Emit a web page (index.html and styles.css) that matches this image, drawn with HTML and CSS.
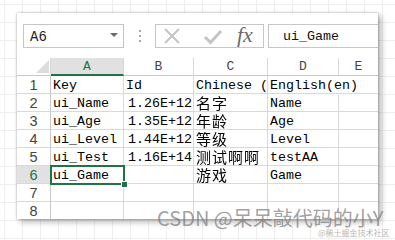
FILE: index.html
```html
<!DOCTYPE html>
<html>
<head>
<meta charset="utf-8">
<link rel="stylesheet" href="styles.css">
</head>
<body>
<div class="window">
  <div class="fbar">
    <div class="namebox"><span class="nb-text">A6</span><span class="caret"></span></div>
    <div class="dots"><i></i><i></i><i></i></div>
    <div class="fbtns">
      <svg class="ic-x" width="18" height="16" viewBox="0 0 18 16"><path d="M2 1 L16 15 M16 1 L2 15" stroke="#c4c4c4" stroke-width="2" fill="none"/></svg>
      <svg class="ic-ok" width="20" height="16" viewBox="0 0 20 16"><path d="M2 8 L7.5 13.5 L18 2" stroke="#c4c4c4" stroke-width="3" fill="none"/></svg>
      <span class="fx">fx</span>
    </div>
    <div class="finput">ui_Game</div>
  </div>
  <div class="sheet">
    <div class="hd corner"><svg width="13" height="13" viewBox="0 0 13 13"><path d="M13 0 L13 13 L0 13 Z" fill="#dcdcdc"/></svg></div>
    <div class="hd col sel">A</div>
    <div class="hd col">B</div>
    <div class="hd col">C</div>
    <div class="hd col">D</div>
    <div class="hd col last">E</div>

    <div class="rh">1</div><div class="c">Key</div><div class="c">Id</div><div class="c clip">Chinese (zh)</div><div class="c spill">English(en)</div><div class="c last"></div>
    <div class="rh">2</div><div class="c">ui_Name</div><div class="c num">1.26E+12</div><div class="c"><span class="zh">名字</span></div><div class="c">Name</div><div class="c last"></div>
    <div class="rh">3</div><div class="c">ui_Age</div><div class="c num">1.35E+12</div><div class="c"><span class="zh">年龄</span></div><div class="c">Age</div><div class="c last"></div>
    <div class="rh">4</div><div class="c">ui_Level</div><div class="c num">1.44E+12</div><div class="c"><span class="zh">等级</span></div><div class="c">Level</div><div class="c last"></div>
    <div class="rh">5</div><div class="c">ui_Test</div><div class="c num">1.16E+14</div><div class="c"><span class="zh">测试啊啊</span></div><div class="c">testAA</div><div class="c last"></div>
    <div class="rh sel">6</div><div class="c">ui_Game</div><div class="c num"></div><div class="c"><span class="zh">游戏</span></div><div class="c">Game</div><div class="c last"></div>
    <div class="rh">7</div><div class="c"></div><div class="c"></div><div class="c"></div><div class="c"></div><div class="c last"></div>
    <div class="rh">8</div><div class="c"></div><div class="c"></div><div class="c"></div><div class="c"></div><div class="c last"></div>

    <div class="selbox"><span class="handle"></span></div>
  </div>
</div>
<div class="wm">CSDN @呆呆敲代码的小Y</div>
<div class="wm2">@稀土掘金技术社区</div>
</body>
</html>
```
FILE: styles.css
```css
html, body {
  margin: 0;
  padding: 0;
}
body {
  width: 395px;
  height: 240px;
  overflow: hidden;
  position: relative;
  background-color: #fff;
  background-image:
    linear-gradient(#eeeeee 1px, transparent 1px),
    linear-gradient(90deg, #eeeeee 1px, transparent 1px);
  background-size: 18px 18px;
  background-position: 4px 4px;
  padding: 13px 0 0 17px;
  box-sizing: border-box;
  font-family: "Liberation Mono", "Noto Sans CJK SC", monospace;
}
.window {
  width: 361px;
  height: 206px;
  background: #fff;
  overflow: hidden;
  box-shadow: 0 0 2px rgba(0,0,0,0.35), 3px 3px 6px rgba(0,0,0,0.3);
}
.fbar {
  display: flex;
  align-items: stretch;
  height: 24px;
  margin-top: 11px;
  padding-left: 6px;
}
.namebox {
  width: 101px;
  box-sizing: border-box;
  border: 1px solid #c6c6c6;
  display: flex;
  align-items: center;
  justify-content: space-between;
  padding: 0 5px 0 6px;
}
.nb-text {
  font-size: 14px;
  color: #222;
  padding-top: 2px;
}
.caret {
  width: 0;
  height: 0;
  border-left: 4px solid transparent;
  border-right: 4px solid transparent;
  border-top: 4px solid #6b6b6b;
  margin-top: -2px;
}
.dots {
  width: 31px;
  display: flex;
  flex-direction: column;
  align-items: center;
  justify-content: center;
  gap: 3px;
}
.dots i {
  width: 2px;
  height: 2px;
  background: #a8a8a8;
  display: block;
}
.fbtns {
  width: 109px;
  box-sizing: border-box;
  border: 1px solid #c6c6c6;
  display: flex;
  align-items: center;
  padding-left: 7px;
}
.ic-x { margin-right: 22px; }
.ic-ok { margin-right: 14px; margin-top: 2px; }
.fx {
  font-family: "Liberation Serif", serif;
  font-style: italic;
  font-size: 22px;
  color: #6a6a6a;
  line-height: 1;
  margin-top: -2px;
}
.finput {
  flex: 1;
  margin-left: 4px;
  margin-right: -4px;
  border: 1px solid #c6c6c6;
  font-size: 13.33px;
  color: #111;
  padding-left: 14px;
  line-height: 22px;
  padding-top: 1px;
}
.sheet {
  position: relative;
  margin-top: 10px;
  display: grid;
  grid-template-columns: 34px 73px 70px 74px 71px 1fr;
  grid-template-rows: repeat(9, 18px);
}
.sheet > div {
  box-sizing: border-box;
  border-right: 1px solid #d9d9d9;
  border-bottom: 1px solid #d9d9d9;
  white-space: nowrap;
  overflow: hidden;
}
.hd {
  font-size: 13px;
  color: #444;
  text-align: center;
  line-height: 18px;
  border-bottom-color: #c8c8c8 !important;
}
.corner {
  display: flex;
  align-items: flex-end;
  justify-content: flex-end;
  padding: 0 1px 2px 0;
}
.corner svg { display: block; }
.hd.sel {
  background: #e1e1e1;
  color: #217346;
  border-bottom: 2px solid #217346 !important;
}
.sheet > .last { border-right: none; }
.rh {
  font-family: "Liberation Sans", "Noto Sans", sans-serif;
  font-size: 14.5px;
  color: #444;
  text-align: center;
  line-height: 19px;
  border-right-color: #c8c8c8 !important;
}
.rh.sel {
  background: #e1e1e1;
  color: #217346;
}
.c {
  font-size: 13.33px;
  color: #000;
  line-height: 20px;
  padding-left: 2px;
}
.c.num {
  text-align: right;
  padding: 0 1px 0 0;
}
.zh {
  display: inline-block;
  font-family: "Noto Sans CJK SC", sans-serif;
  font-size: 15px;
  line-height: 15px;
  letter-spacing: 1px;
  vertical-align: top;
  padding-top: 1px;
  color: #000;
  will-change: transform;
}
.sheet > .spill {
  overflow: visible;
  border-right-color: transparent;
  position: relative;
  z-index: 1;
}
.selbox {
  position: absolute;
  left: 33px;
  top: 107px;
  width: 75px;
  height: 20px;
  box-sizing: border-box;
  border: 2px solid #217346 !important;
  overflow: visible !important;
}
.handle {
  position: absolute;
  right: -5px;
  bottom: -5px;
  width: 5px;
  height: 5px;
  background: #217346;
  border: 1px solid #fff;
}
.wm {
  position: absolute;
  left: 157px;
  top: 208px;
  font-family: "Noto Sans CJK SC", sans-serif;
  font-size: 20px;
  line-height: 20px;
  color: rgba(120,120,120,0.7);
  white-space: nowrap;
}
.wm2 {
  position: absolute;
  left: 318px;
  top: 228px;
  font-family: "Noto Sans CJK SC", sans-serif;
  font-size: 8px;
  line-height: 10px;
  color: #b8b8b8;
  white-space: nowrap;
}
```
